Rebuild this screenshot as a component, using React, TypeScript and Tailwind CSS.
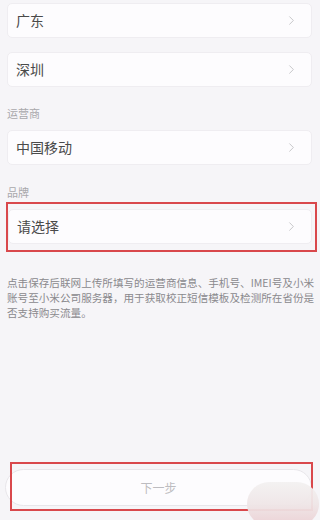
import { ChevronRight } from "lucide-react";

const font = { fontFamily: '"Noto Sans CJK SC", "Noto Sans", sans-serif' };

function Row({ label }: { label: string }) {
  return (
    <div className="flex h-[35px] items-center justify-between rounded-[5px] border border-[#efedf1] bg-[#fdfcfe] pl-[8px] pr-[12px]">
      <span className="text-[14px] text-[#4a4a4a]">{label}</span>
      <ChevronRight className="h-[15px] w-[15px] text-[#b5b5b8]" strokeWidth={1.2} />
    </div>
  );
}

export default function App() {
  return (
    <div className="relative h-[520px] w-[320px] overflow-hidden bg-[#f6f5f8]" style={font}>
      <div className="px-[7px] pt-[3px] pr-[8px]">
        <Row label="广东" />
        <div className="mt-[14px]">
          <Row label="深圳" />
        </div>

        <div className="mt-[19px] text-[11px] leading-[14px] text-[#a9a8ac]">运营商</div>
        <div className="mt-[10px]">
          <Row label="中国移动" />
        </div>

        <div className="mt-[20px] text-[11px] leading-[14px] text-[#a9a8ac]">品牌</div>
        <div className="relative mt-[10px]">
          <div className="ml-[1px]">
            <Row label="请选择" />
          </div>
          <div className="absolute -top-[7px] -bottom-[8px] -left-[1px] -right-[5px] border-2 border-[#d9484c]" />
        </div>

        <p className="mr-[-6px] mt-[31px] text-[10.6px] leading-[15px] text-[#8a898d]">
          点击保存后联网上传所填写的运营商信息、手机号、IMEI号及小米账号至小米公司服务器，用于获取校正短信模板及检测所在省份是否支持购买流量。
        </p>
      </div>

      <div className="absolute left-[5px] right-[8px] top-[469px] h-[37px]">
        <div className="flex h-full items-center justify-center rounded-full border border-[#e8e6ea] bg-[#fdfcfe] text-[12px] text-[#bdbcc0]">
          下一步
        </div>
        <div className="absolute -top-[7px] -bottom-[5px] left-[5px] -right-[1px] border-2 border-[#d9484c]" />
      </div>

      <div className="absolute left-[247px] top-[482px] h-[44px] w-[72px] rounded-full bg-gradient-to-b from-[#f3f1f1] via-[#efe6e7] to-[#ebcfd3] opacity-95" />
    </div>
  );
}
